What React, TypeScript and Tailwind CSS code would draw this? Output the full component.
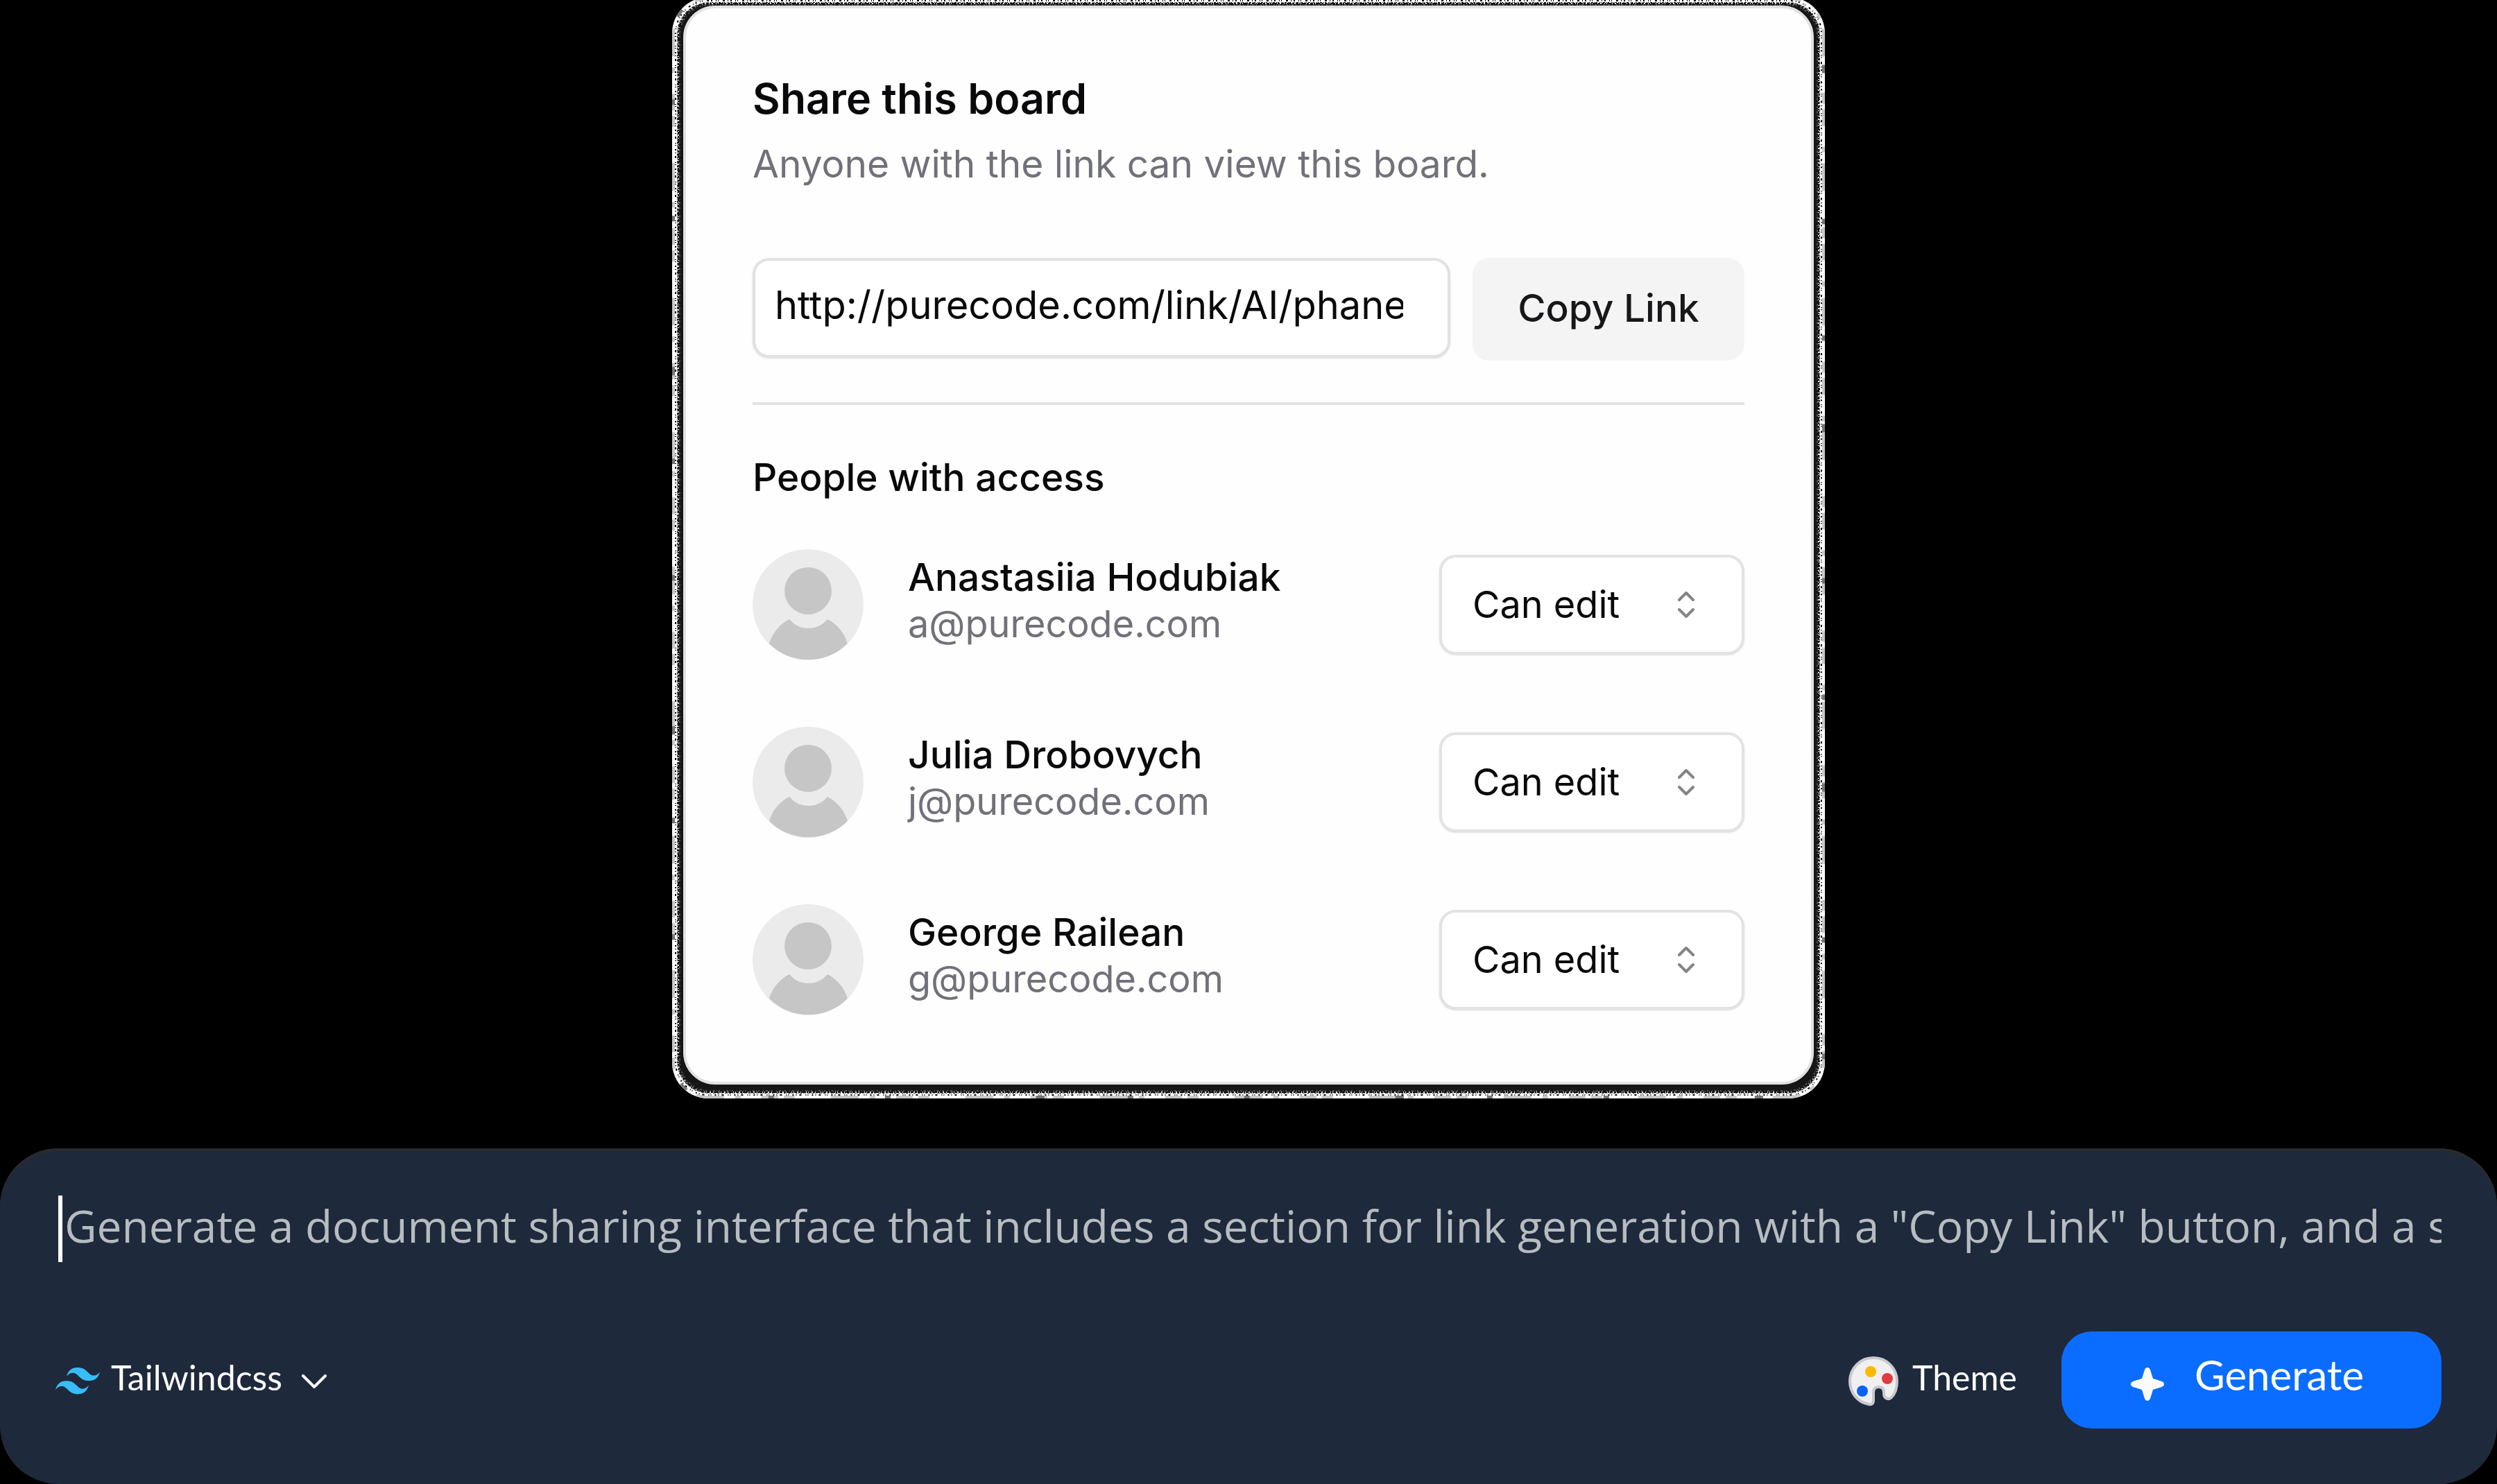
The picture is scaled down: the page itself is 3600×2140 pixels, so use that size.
import React from "react";

type Person = { name: string; email: string };

const people: Person[] = [
  { name: "Anastasiia Hodubiak", email: "a@purecode.com" },
  { name: "Julia Drobovych", email: "j@purecode.com" },
  { name: "George Railean", email: "g@purecode.com" },
];

function Avatar() {
  return (
    <svg viewBox="0 0 160 160" className="size-40 shrink-0 rounded-full bg-[#ebebeb]" aria-hidden="true">
      <circle cx="80" cy="60" r="34" fill="#c6c6c6" />
      <path
        d="M53 101Q64 114 80 114Q97 114 108 101C122 108 132 120 137 136A80 80 0 0 1 24 136C29 120 39 108 53 101Z"
        fill="#c6c6c6"
      />
    </svg>
  );
}

function TailwindLogo() {
  return (
    <svg viewBox="0 0 54 33" className="mt-1 w-16 shrink-0" fill="#38bdf8" aria-hidden="true">
      <path d="M27 0c-7.2 0-11.7 3.6-13.5 10.8 2.7-3.6 5.85-4.95 9.45-4.05 2.054.513 3.522 2.004 5.147 3.653C30.744 13.09 33.808 16.2 40.5 16.2c7.2 0 11.7-3.6 13.5-10.8-2.7 3.6-5.85 4.95-9.45 4.05-2.054-.513-3.522-2.004-5.147-3.653C36.756 3.11 33.692 0 27 0zM13.5 16.2C6.3 16.2 1.8 19.8 0 27c2.7-3.6 5.85-4.95 9.45-4.05 2.054.514 3.522 2.004 5.147 3.653C17.244 29.29 20.308 32.4 27 32.4c7.2 0 11.7-3.6 13.5-10.8-2.7 3.6-5.85 4.95-9.45 4.05-2.054-.513-3.522-2.004-5.147-3.653C23.256 19.31 20.192 16.2 13.5 16.2z" />
    </svg>
  );
}

function Palette() {
  return (
    <svg viewBox="0 0 72 72" className="mt-1 size-18 shrink-0" aria-hidden="true">
      <path
        d="M36 2C55 2 70 17 70 36C70 46 67 54 62 59C58 63 51 61 51 54V52C51 46 48 44 43.5 44S36 46 36 52V63C36 68 34 70 29 69C13 66 2 52 2 36C2 17 17 2 36 2Z"
        fill="#f0f0f1"
        stroke="#c8c9ce"
        strokeWidth="4"
      />
      <circle cx="32" cy="22" r="8" fill="#fbb800" />
      <circle cx="56" cy="32" r="8" fill="#e03c41" />
      <circle cx="20" cy="50" r="8" fill="#0862ff" />
    </svg>
  );
}

function Sparkle() {
  return (
    <svg viewBox="0 0 48 48" className="mt-3 size-12 shrink-0" fill="#fafafa" aria-hidden="true">
      <path d="M24 0C26 0 27.500 1.500 28.300 4L32 16L44 19.700C46.500 20.500 48 22 48 24S46.500 27.500 44 28.300L32 32L28.300 44C27.500 46.500 26 48 24 48S20.500 46.500 19.700 44L16 32L4 28.300C1.500 27.500 0 26 0 24S1.500 20.500 4 19.700L16 16L19.700 4C20.500 1.500 22 0 24 0Z" />
    </svg>
  );
}

/* Rough, speckled shadow edge around the card */
function GrainEdge() {
  return (
    <div className="pointer-events-none absolute -inset-x-5 -top-4 -bottom-6">
      <svg className="size-full" fill="none" aria-hidden="true">
        <rect x="4" y="4" rx="52" className="h-[calc(100%-8px)] w-[calc(100%-8px)]" fill="#fff" />
        <rect x="6" y="6" rx="50" className="h-[calc(100%-12px)] w-[calc(100%-12px)]" stroke="#c9c9c9" strokeWidth="4" strokeDasharray="24 30 8 16 40 52 16 8" />
        <rect x="6" y="6" rx="50" className="h-[calc(100%-12px)] w-[calc(100%-12px)]" stroke="#777" strokeWidth="4" strokeDasharray="8 120 12 210 8 160" />
        <rect x="11" y="11" rx="46" className="h-[calc(100%-22px)] w-[calc(100%-22px)]" fill="#161616" />
        <rect x="9" y="9" rx="47" className="h-[calc(100%-18px)] w-[calc(100%-18px)]" stroke="#000" strokeWidth="2" strokeDasharray="1 3 2 5 1 2 1 6 3 4" />
        <rect x="11" y="11" rx="46" className="h-[calc(100%-22px)] w-[calc(100%-22px)]" stroke="#fff" strokeWidth="2" strokeDasharray="2 1 1 2 3 1 1 1 2 3" />
        <rect x="13" y="13" rx="44" className="h-[calc(100%-26px)] w-[calc(100%-26px)]" stroke="#ddd" strokeWidth="2" strokeDasharray="1 3 2 4 1 2 1 7" />
        <rect x="15" y="15" rx="43" className="h-[calc(100%-30px)] w-[calc(100%-30px)]" stroke="#555" strokeWidth="2" strokeDasharray="1 2 3 3 1 5 2 2" />
      </svg>
    </div>
  );
}

function AccessSelect({ person }: { person: Person }) {
  return (
    <div className="relative w-[440px] shrink-0">
      <select
        aria-label={`Access for ${person.name}`}
        className="h-36 w-full appearance-none rounded-3xl border-4 border-[#e3e3e3] bg-white pr-24 pl-11 text-[54px] leading-[68px] text-[#09090b] shadow-sm"
      >
        <option>Can edit</option>
        <option>Can view</option>
      </select>
      <svg
        viewBox="0 0 24 40"
        className="pointer-events-none absolute top-[52px] right-[72px] h-10 w-6"
        fill="none"
        stroke="#848484"
        strokeWidth="4"
        strokeLinecap="round"
        strokeLinejoin="round"
        aria-hidden="true"
      >
        <path d="M2 13L12 3L22 13M2 27L12 37L22 27" />
      </svg>
    </div>
  );
}

function ShareCard() {
  return (
    <section className="relative w-full max-w-[1630px]">
      <GrainEdge />
      <div className="relative rounded-[46px] border-4 border-[#e2e2e2] bg-[#fefefe] p-24 text-[#09090b]">
        <h1 className="text-[61px] leading-[68px] font-semibold">Share this board</h1>
        <p className="mt-5 text-[55px] leading-[80px] text-[#71717a]">Anyone with the link can view this board.</p>

        <div className="mt-24 flex items-start gap-8">
          <div className="h-36 min-w-0 flex-1 rounded-3xl border-4 border-[#e2e2e2] bg-white pr-16 pl-7 shadow-sm">
            <input
              type="text"
              aria-label="Board link"
              defaultValue="http://purecode.com/link/AI/phanes"
              className="block h-32 w-full bg-transparent text-[56px] leading-[80px] outline-none"
            />
          </div>
          <button type="button" className="h-[148px] w-[392px] rounded-3xl bg-[#f4f4f4] pb-1 text-[55px] leading-[80px] font-medium text-[#18181b]">
            Copy Link
          </button>
        </div>

        <hr className="mt-[60px] border-t-4 border-[#e2e2e2]" />

        <h2 className="mt-16 text-[55px] leading-[80px] font-medium">People with access</h2>
        <ul className="mt-16 flex flex-col gap-24">
          {people.map((person) => (
            <li key={person.email} className="flex items-center gap-16">
              <Avatar />
              <div className="min-w-0 flex-1 pb-3 text-[55px] leading-[68px]">
                <p className="font-medium">{person.name}</p>
                <p className="text-[54px] text-[#71717a]">{person.email}</p>
              </div>
              <AccessSelect person={person} />
            </li>
          ))}
        </ul>
      </div>
    </section>
  );
}

function PromptBar() {
  return (
    <section className="w-full rounded-[84px] bg-[#1e293b] px-20 pt-[68px] pb-20 font-[Lato,sans-serif] text-white inset-shadow-[0_4px_0_0_#2b2b2d]">
      <div className="flex items-center">
        <span className="ml-1 h-24 w-1.5 shrink-0 bg-white" aria-hidden="true" />
        <input
          type="text"
          aria-label="Prompt"
          defaultValue={'Generate a document sharing interface that includes a section for link generation with a "Copy Link" button, and a section for people with access'}
          className="h-24 min-w-0 flex-1 bg-transparent pb-2.5 pl-[3px] font-['Open_Sans',sans-serif] text-[64px] leading-[88px] text-[#b6bcc0] outline-none"
        />
      </div>
      <div className="mt-[100px] flex items-center">
        <label className="flex items-center">
          <TailwindLogo />
          <select aria-label="Framework" className="ml-4 appearance-none bg-transparent pb-2 text-[50px] leading-[64px] outline-none">
            <option>Tailwindcss</option>
          </select>
          <svg viewBox="0 0 36 20" className="mt-1 ml-7 h-5 w-9" fill="none" stroke="#fff" strokeWidth="4" strokeLinecap="round" strokeLinejoin="round" aria-hidden="true">
            <path d="M2 2L18 18L34 2" />
          </svg>
        </label>
        <button type="button" className="mr-16 ml-auto flex items-center gap-5 text-[50px] leading-[64px]">
          <Palette />
          <span className="pb-2">Theme</span>
        </button>
        <button type="button" className="flex h-[140px] w-[548px] items-center justify-center gap-11 rounded-[44px] bg-[#0b6dff] pr-3 text-[60px] leading-[64px]">
          <Sparkle />
          <span className="pb-4">Generate</span>
        </button>
      </div>
    </section>
  );
}

export default function App() {
  return (
    <main className="flex min-h-screen flex-col items-center gap-[92px] overflow-hidden bg-black pt-2 font-[Inter,sans-serif]">
      <ShareCard />
      <PromptBar />
    </main>
  );
}
